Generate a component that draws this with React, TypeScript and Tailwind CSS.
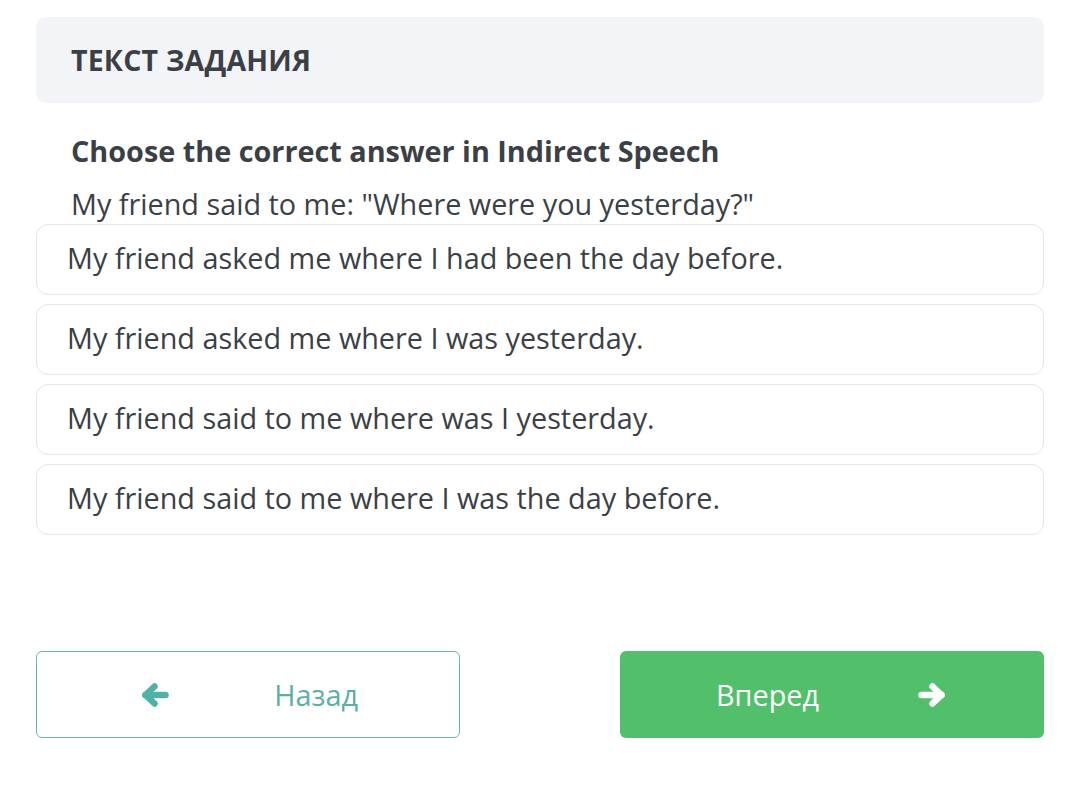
const options = [
  "My friend asked me where I had been the day before.",
  "My friend asked me where I was yesterday.",
  "My friend said to me where was I yesterday.",
  "My friend said to me where I was the day before.",
];

function Arrow({ dir, className }: { dir: "left" | "right"; className?: string }) {
  return (
    <svg
      className={className}
      fill="none"
      height="26"
      stroke="currentColor"
      strokeLinecap="round"
      strokeLinejoin="round"
      strokeWidth="6.5"
      style={{ transform: dir === "right" ? "scaleX(-1)" : undefined }}
      viewBox="0 0 28 26"
      width="28"
    >
      <path d="M4.5 13H24.5" />
      <path d="M13.5 4.5L4.5 13L13.5 21.5" />
    </svg>
  );
}

export default function App() {
  return (
    <div
      className="w-[1080px] h-[785px] bg-white px-[36px] pt-[17px] text-[#3b3f46]"
      style={{ fontFamily: '"Open Sans", "Liberation Sans", sans-serif' }}
    >
      <div className="h-[86px] rounded-[10px] bg-[#f3f4f8] flex items-center pl-[35px]">
        <h2 className="text-[28.5px] font-bold tracking-[0.2px]">ТЕКСТ ЗАДАНИЯ</h2>
      </div>

      <div className="pl-[35px] pt-[29px]">
        <p className="text-[28.8px] font-bold leading-[38px]">Choose the correct answer in Indirect Speech</p>
        <p className="text-[28.8px] leading-[38px] mt-[15px]">My friend said to me: "Where were you yesterday?"</p>
      </div>

      <ul className="flex flex-col gap-[9px] mt-[1px]">
        {options.map((opt) => (
          <li key={opt}>
            <button
              className="w-full h-[71px] text-left rounded-[12px] border border-[#e3e5e9] bg-white pl-[30px] pb-[3px] text-[28.8px] text-[#3b3f46]"
              type="button"
            >
              {opt}
            </button>
          </li>
        ))}
      </ul>

      <div className="flex justify-between mt-[116px]">
        <button
          className="w-[424px] h-[87px] rounded-[6px] border border-[#6fb5ab] bg-white flex items-center justify-between pl-[104px] pr-[101px] text-[28.8px] text-[#5cafa4]"
          type="button"
        >
          <Arrow className="text-[#4fb2a7]" dir="left" />
          <span>Назад</span>
        </button>
        <button
          className="w-[424px] h-[87px] rounded-[6px] bg-[#52c06a] flex items-center justify-between pl-[96px] pr-[98px] text-[28.8px] text-white"
          type="button"
        >
          <span>Вперед</span>
          <Arrow className="text-white" dir="right" />
        </button>
      </div>
    </div>
  );
}
